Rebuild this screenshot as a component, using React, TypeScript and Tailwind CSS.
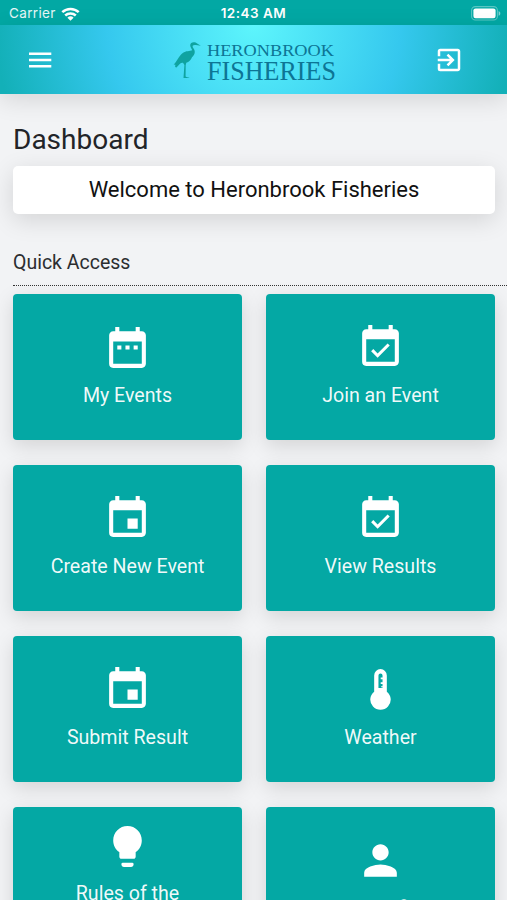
import type { IconType } from 'react-icons';
import { MdDateRange, MdEvent, MdEventAvailable, MdExitToApp, MdPerson } from 'react-icons/md';

interface IconProps {
  className?: string;
}

interface Tile {
  label: string;
  icon: IconType | ((props: IconProps) => React.ReactNode);
}

function MenuIcon({ className }: IconProps) {
  return (
    <svg viewBox="0 0 30 30" fill="currentColor" className={className}>
      <path d="M4 7.500h22.300v2.600H4zM4 13.700h22.300v2.600H4zM4 19.900h22.300v2.600H4z" />
    </svg>
  );
}

function ThermometerIcon({ className }: IconProps) {
  return (
    <svg viewBox="0 0 24 24" fill="currentColor" className={className}>
      <path
        fillRule="evenodd"
        d="M12 2a3.1 3.1 0 0 0-3.1 3.1v7.95a5 5 0 1 0 6.2 0V5.1A3.1 3.1 0 0 0 12 2zm0 2.2a1 1 0 0 1 1 1v.9h-.9v.9h.9v1.4h-.9v.9h.9v1.1h-.7v.5h.7v.4h-2V5.2a1 1 0 0 1 1-1z"
      />
    </svg>
  );
}

function BulbIcon({ className }: IconProps) {
  return (
    <svg viewBox="0 0 24 24" fill="currentColor" className={className}>
      <path d="M9.7 20h4.6a.7.7 0 0 1 .7.7c0 .75-.55 1.3-1.3 1.3h-3.4c-.75 0-1.3-.55-1.3-1.3a.7.7 0 0 1 .7-.7zM12 2C8.140 2 5 5.140 5 9c0 2.380 1.190 4.470 3 5.740V17c0 .55.450 1 1 1h6c.55 0 1-.45 1-1v-2.260c1.810-1.270 3-3.360 3-5.740 0-3.860-3.140-7-7-7z" />
    </svg>
  );
}

const tiles: Tile[] = [
  { label: 'My Events', icon: MdDateRange },
  { label: 'Join an Event', icon: MdEventAvailable },
  { label: 'Create New Event', icon: MdEvent },
  { label: 'View Results', icon: MdEventAvailable },
  { label: 'Submit Result', icon: MdEvent },
  { label: 'Weather', icon: ThermometerIcon },
  { label: 'Rules of the Fishery', icon: BulbIcon },
  { label: 'My Profile', icon: MdPerson },
];

function StatusBar() {
  return (
    <div className="grid h-[25px] grid-cols-3 items-center bg-[#02a8a4] px-[8px] font-['Inter',sans-serif] text-[13.5px] text-white">
      <div className="flex items-center gap-[5px] pt-[2px] pl-px text-white/90">
        <span className="tracking-[0.35px]">Carrier</span>
        <svg viewBox="0 0 19 14" className="h-[14px] w-[19px]" fill="none" stroke="white" strokeWidth="2.5">
          <path d="M1.3 5.2a11.8 11.8 0 0 1 16.4 0" />
          <path d="M4.2 8.5a7.7 7.7 0 0 1 10.6 0" />
          <path d="M9.5 13.8 6.4 10.7a4.5 4.5 0 0 1 6.2 0z" fill="white" stroke="none" />
        </svg>
      </div>
      <div className="pt-[2px] text-center font-semibold tracking-[0.5px] whitespace-nowrap">12:43 AM</div>
      <svg viewBox="0 0 30 15" className="-mr-[2px] mt-[2px] h-[15px] w-[30px] justify-self-end">
        <rect x="0.6" y="0.6" width="25.8" height="13.4" rx="3.8" fill="none" stroke="white" strokeOpacity="0.35" strokeWidth="1.1" />
        <rect x="2.4" y="2.4" width="22.2" height="9.8" rx="2.2" fill="white" />
        <path d="M27.6 5v4.8c1-.4 1.7-1.3 1.7-2.4S28.6 5.4 27.6 5z" fill="white" fillOpacity="0.5" />
      </svg>
    </div>
  );
}

function Logo() {
  return (
    <svg viewBox="0 0 168 50" className="h-[50px] w-[168px]">
      <path
        fill="#0fa3a0"
        d="M19.2 6.2c0-2.600 3-3.800 5.400-2.600l5.200 3.200-4.900-.9c-1.800 0-3 .1-3.300 1.200-.3 1.600 1.800 3 2.100 5 .4 2.700-1 4.600-2.700 6.100-1.200 2.900-3 4.700-5.700 5.600l-.6 2.400-.1 11.400c.8.8 2.800.6 4 1.300l-6.100.2.9-13.100-1.400-2.300c-1.400-.1-2.400.3-3.300 1.200l-3.200 3.700-1.400-.5.3-2.300-1.700-.2c3.600-3.400 4.700-8.600 9.100-11.700 3.300-2.300 6.900-1.400 9.400-2.600-.6-1.800-2-3.200-2-5.100z"
      />
      <g fill="#0d7595" fontFamily="'Liberation Serif', serif">
        <text x="36" y="17" fontSize="17.500" textLength="127" lengthAdjust="spacingAndGlyphs">
          HERONBROOK
        </text>
        <text x="36" y="40.700" fontSize="27" textLength="129" lengthAdjust="spacingAndGlyphs">
          FISHERIES
        </text>
      </g>
    </svg>
  );
}

function Header() {
  return (
    <header className="relative flex h-[69px] items-center justify-between bg-[radial-gradient(circle_at_50%_0%,#5df5fc_0%,#35c8ee_56%,#13b0b8_98%)] pr-[43px] pl-[25px] text-white shadow-[0_6px_24px_rgba(0,0,0,0.12)]">
      <MenuIcon className="size-[30px]" />
      <div className="absolute top-[14px] left-[171px]">
        <Logo />
      </div>
      <MdExitToApp className="size-[30px]" />
    </header>
  );
}

function QuickTile({ label, icon: Icon }: Tile) {
  return (
    <div className="flex h-[146.5px] flex-col items-center justify-center rounded-[4px] bg-[#04a8a4] pb-px text-center text-white shadow-[0_6px_20px_rgba(0,0,0,0.13)]">
      <Icon className="mb-[8.5px] size-[49px]" />
      <p className="w-[164px] text-[19.6px] leading-[29px] text-white/95">{label}</p>
    </div>
  );
}

export default function App() {
  return (
    <div className="h-[900px] overflow-hidden bg-[#f2f3f5] font-['Roboto',sans-serif]">
      <StatusBar />
      <Header />
      <main className="pl-[13px]">
        <h1 className="pt-[29px] text-[28px] leading-[34px] text-[#222428]">Dashboard</h1>
        <div className="mt-[9px] mr-[12px] flex h-[48px] items-center justify-center rounded-[5px] bg-white pb-[2px] text-[22px] text-[#111] shadow-[0_6px_24px_rgba(0,0,0,0.13)]">
          Welcome to Heronbrook Fisheries
        </div>
        <h2 className="mt-[35px] text-[19.5px] leading-[28px] text-[#2b2d30]">Quick Access</h2>
        <div className="mt-[8px] border-t border-dotted border-[#333]" />
        <div className="mt-[7.5px] mr-[12px] grid grid-cols-2 gap-x-[24px] gap-y-[24.5px]">
          {tiles.map((tile) => (
            <QuickTile key={tile.label} {...tile} />
          ))}
        </div>
      </main>
    </div>
  );
}
